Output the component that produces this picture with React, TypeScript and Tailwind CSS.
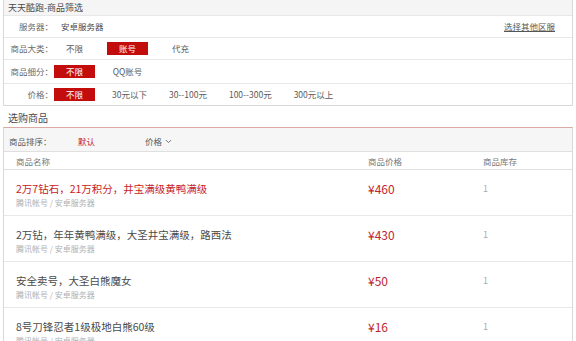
import { ChevronDown } from "lucide-react";

const font = { fontFamily: '"Microsoft YaHei", "Noto Sans CJK SC", "Noto Sans", sans-serif' };

interface FilterRowProps {
  label: string;
  options: string[];
  active: number;
  height: string;
  last?: boolean;
}

const FilterRow = ({ label, options, active, height, last }: FilterRowProps) => (
  <div className={`flex items-center ${last ? "" : "border-b border-[#e8e8e8]"} ${height}`}>
    <span className="w-[49px] text-right text-[8.5px] text-[#6a6a6a]">{label}</span>
    <div className="ml-[1px] flex gap-[12px]">
      {options.map((o, i) => (
        <span
          key={o}
          className={
            i === active
              ? "flex h-[13px] min-w-[41px] items-center justify-center bg-[#c30d0d] px-[5px] text-[8.5px] text-white"
              : "flex h-[13px] min-w-[41px] items-center justify-center px-[5px] text-[8.5px] text-[#5a5a5a]"
          }
        >
          {o}
        </span>
      ))}
    </div>
  </div>
);

const items = [
  { title: "2万7钻石，21万积分，井宝满级黄鸭满级", price: "460", hot: true },
  { title: "2万钻，年年黄鸭满级，大圣井宝满级，路西法", price: "430", hot: false },
  { title: "安全卖号，大圣白熊魔女", price: "50", hot: false },
  { title: "8号刀锋忍者1级极地白熊60级", price: "16", hot: false },
];

export default function App() {
  return (
    <div className="h-[341px] w-[576px] overflow-hidden bg-white" style={font}>
      <div className="ml-[3px] w-[570px] border-x border-b border-[#d8d8d8]">
        <div className="flex h-[16px] items-center border-b border-[#e8e8e8] bg-[#f5f5f5] pl-[4px] text-[9px] text-[#4a4a4a]">
          天天酷跑-商品筛选
        </div>
        <div className="flex h-[22px] items-center border-b border-[#e8e8e8]">
          <span className="w-[49px] text-right text-[8.5px] text-[#6a6a6a]">服务器：</span>
          <span className="ml-[8px] text-[8.5px] text-[#4a4a4a]">安卓服务器</span>
          <span className="ml-auto mr-[17px] text-[8.5px] text-[#555] underline">选择其他区服</span>
        </div>
        <FilterRow label="商品大类：" options={["不限", "账号", "代充"]} active={1} height="h-[22px]" />
        <FilterRow label="商品细分：" options={["不限", "QQ账号"]} active={0} height="h-[24px]" />
        <FilterRow
          label="价格："
          options={["不限", "30元以下", "30--100元", "100--300元", "300元以上"]}
          active={0}
          height="h-[21px]"
          last
        />
      </div>

      <div className="flex h-[21px] items-end pb-[2px] pl-[8px] text-[10px] text-[#4a4a4a]">选购商品</div>

      <div className="ml-[3px] w-[570px] border-x border-t border-[#d8d8d8] border-t-[#dcaaa4]">
        <div className="flex h-[24px] items-center border-b border-[#e0e0e0] bg-[#f6f6f6] pt-[3px] text-[8.5px]">
          <span className="ml-[5px] w-[69px] text-[#5a5a5a]">商品排序：</span>
          <span className="w-[67px] text-[#c82222]">默认</span>
          <span className="flex items-center gap-[2px] text-[#5a5a5a]">
            价格
            <ChevronDown size={9} strokeWidth={2.2} />
          </span>
        </div>
        <div className="flex h-[18px] items-center border-b border-[#e0e0e0] pt-[1px] text-[8.5px] text-[#777]">
          <span className="ml-[12px] w-[352px]">商品名称</span>
          <span className="w-[115px]">商品价格</span>
          <span>商品库存</span>
        </div>
        {items.map((it) => (
          <div key={it.title} className="flex h-[46px] border-b border-[#e8e8e8] pt-[11px]">
            <div className="ml-[12px] w-[352px]">
              <div className={`text-[10.5px] leading-[15px] ${it.hot ? "text-[#c82222]" : "text-[#4a4a4a]"}`}>
                {it.title}
              </div>
              <div className="text-[8px] leading-[13px] text-[#b0b0b0]">腾讯帐号 / 安卓服务器</div>
            </div>
            <div className="w-[115px] text-[12px] leading-[15px] text-[#c0262c]">¥{it.price}</div>
            <div className="text-[9px] leading-[15px] text-[#aaa]">1</div>
          </div>
        ))}
      </div>
    </div>
  );
}
